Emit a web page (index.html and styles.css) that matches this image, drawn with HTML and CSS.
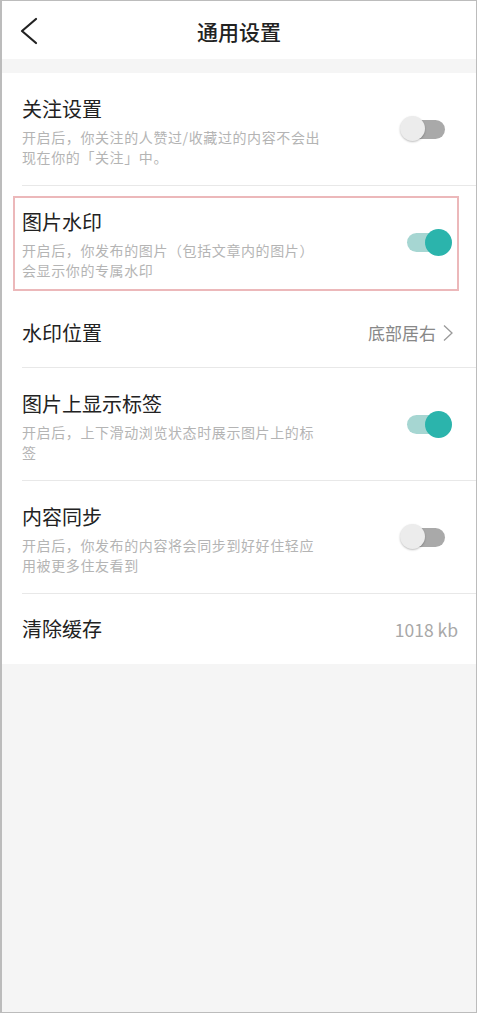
FILE: index.html
```html
<!DOCTYPE html>
<html lang="zh-CN">
<head>
    <meta charset="UTF-8">
    <meta name="viewport" content="width=device-width, initial-scale=1.0">
    <title>通用设置</title>
    <link rel="stylesheet" href="styles.css">
</head>
<body>

<div class="phone">
    <div class="header">
        <svg class="back" width="20" height="28" viewBox="0 0 20 28">
            <polyline points="16,2 2,14 16,26" fill="none" stroke="#222" stroke-width="2.2" stroke-linecap="round" stroke-linejoin="round"/>
        </svg>
        <h1>通用设置</h1>
    </div>

    <div class="gap"></div>

    <div class="list">
        <div class="item">
            <div class="item-body">
                <div class="text">
                    <div class="title">关注设置</div>
                    <div class="desc">开启后，你关注的人赞过/收藏过的内容不会出<br>现在你的「关注」中。</div>
                </div>
                <div class="switch"></div>
            </div>
        </div>

        <div class="item highlighted">
            <div class="item-body no-line">
                <div class="text">
                    <div class="title">图片水印</div>
                    <div class="desc">开启后，你发布的图片（包括文章内的图片）<br>会显示你的专属水印</div>
                </div>
                <div class="switch on"></div>
            </div>
            <div class="mark"></div>
        </div>

        <div class="item">
            <div class="item-body simple">
                <div class="title">水印位置</div>
                <div class="value">底部居右
                    <svg class="arrow" width="12" height="18" viewBox="0 0 12 18">
                        <polyline points="2,1.5 10,9 2,16.5" fill="none" stroke="#9a9a9a" stroke-width="1.3"/>
                    </svg>
                </div>
            </div>
        </div>

        <div class="item">
            <div class="item-body">
                <div class="text">
                    <div class="title">图片上显示标签</div>
                    <div class="desc">开启后，上下滑动浏览状态时展示图片上的标<br>签</div>
                </div>
                <div class="switch on"></div>
            </div>
        </div>

        <div class="item">
            <div class="item-body">
                <div class="text">
                    <div class="title">内容同步</div>
                    <div class="desc">开启后，你发布的内容将会同步到好好住轻应<br>用被更多住友看到</div>
                </div>
                <div class="switch"></div>
            </div>
        </div>

        <div class="item">
            <div class="item-body simple no-line">
                <div class="title">清除缓存</div>
                <div class="value size">1018 kb</div>
            </div>
        </div>
    </div>
</div>

</body>
</html>
```

FILE: styles.css
```css
body {
    margin: 0;
    font-family: "Noto Sans CJK SC", "Noto Sans", sans-serif;
    background: #fff;
}
.phone {
    width: 474px;
    height: 1011px;
    border: 1px solid #bcbcbc;
    border-left-width: 2px;
    background: #f5f5f5;
    overflow: hidden;
}
.header {
    height: 58px;
    background: #fff;
    display: flex;
    align-items: center;
    justify-content: center;
    position: relative;
}
.header h1 {
    margin: 0;
    font-size: 21px;
    font-weight: 500;
    color: #222;
    line-height: 28px;
    margin-top: 1px;
}
.back {
    position: absolute;
    left: 18px;
    top: 16px;
}
.gap {
    height: 14px;
}
.list {
    background: #fff;
}
.item {
    padding-left: 20px;
    position: relative;
}
.item-body {
    display: flex;
    align-items: center;
    justify-content: space-between;
    padding: 24px 22px 18px 0;
    border-bottom: 1px solid #e8e8e8;
}
.item-body.no-line {
    border-bottom: none;
}
.item-body.simple {
    height: 70px;
    padding-top: 0;
    padding-bottom: 0;
    box-sizing: border-box;
}
.title {
    font-size: 20px;
    line-height: 24px;
    color: #222;
}
.desc {
    margin-top: 6px;
    font-size: 14px;
    letter-spacing: 0.6px;
    line-height: 20px;
    color: #b4b4b4;
    white-space: nowrap;
}
.value {
    font-size: 17px;
    color: #888;
    display: flex;
    align-items: center;
    gap: 6px;
}
.value.size {
    color: #a8a8a8;
    font-size: 17.5px;
    margin-right: -4px;
}
.arrow {
    margin-top: 1px;
}
.switch {
    width: 52px;
    height: 26px;
    margin-right: 2px;
    margin-top: -6px;
    position: relative;
    flex-shrink: 0;
}
.switch::before {
    content: "";
    position: absolute;
    left: 7px;
    right: 7px;
    top: 3.5px;
    height: 19px;
    border-radius: 10px;
    background: #a9a9a9;
}
.switch::after {
    content: "";
    position: absolute;
    left: 0;
    top: 0;
    width: 25px;
    height: 25px;
    border-radius: 50%;
    background: #ececec;
    box-shadow: 0 1px 2px rgba(0, 0, 0, 0.25);
}
.switch.on::before {
    background: #a6d6d2;
}
.switch.on::after {
    left: auto;
    right: 0;
    top: -0.5px;
    width: 27px;
    height: 27px;
    background: #2bb4ac;
    box-shadow: none;
}
.mark {
    position: absolute;
    left: 11px;
    top: 10px;
    width: 442px;
    height: 91px;
    border: 2px solid #ecb8ba;
}
```
